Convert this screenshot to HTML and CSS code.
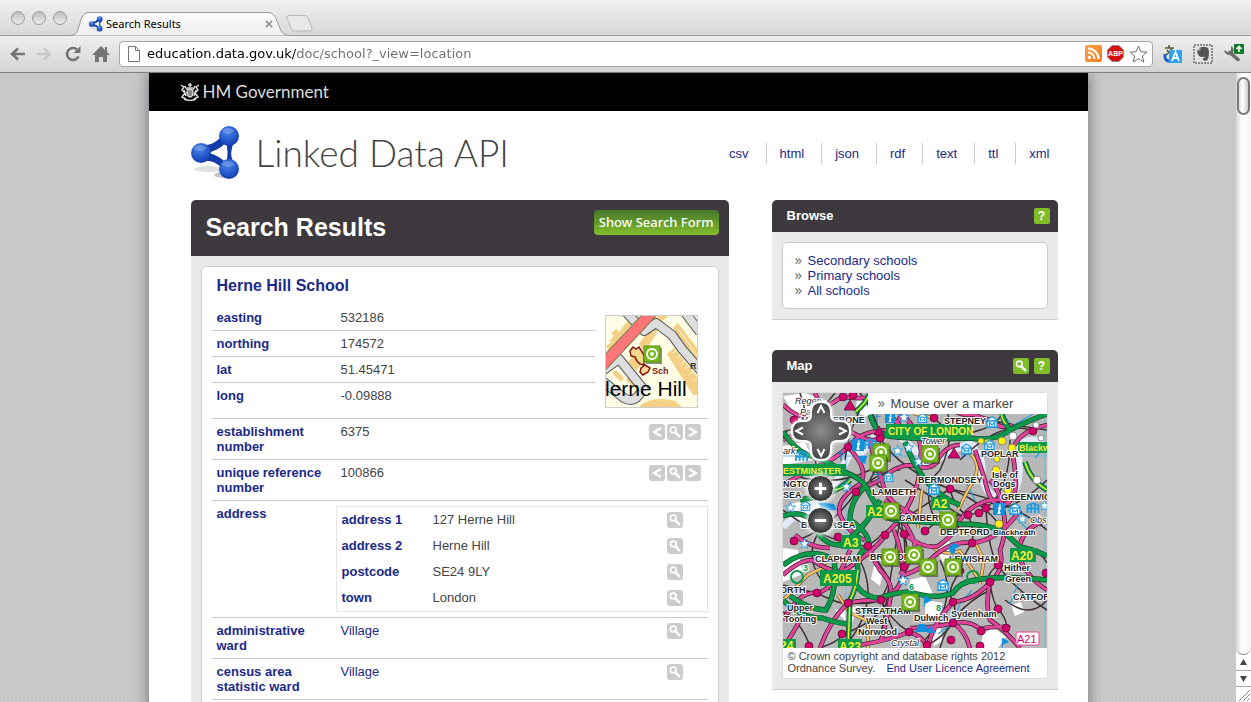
FILE: index.html
```html
<!DOCTYPE html>
<html lang="en">
<head>
<meta charset="utf-8">
<title>Search Results</title>
<link rel="stylesheet" href="styles.css">
</head>
<body>
<svg class="defs" aria-hidden="true">
  <defs>
    <radialGradient id="ball" cx=".42" cy=".3" r=".75"><stop offset="0" stop-color="#4a80e4"/><stop offset=".5" stop-color="#2a60d0"/><stop offset="1" stop-color="#1238a8"/></radialGradient>
    <radialGradient id="pad" cx=".5" cy=".5" r=".6"><stop offset="0" stop-color="#8c8c8c"/><stop offset="1" stop-color="#333"/></radialGradient>
    <linearGradient id="tabfill" x1="0" y1="0" x2="0" y2="1"><stop offset="0" stop-color="#fbfbfb"/><stop offset="1" stop-color="#efefef"/></linearGradient>
    <linearGradient id="feed" x1="0" y1="0" x2="1" y2="1"><stop offset="0" stop-color="#fba54c"/><stop offset="1" stop-color="#ee7d1c"/></linearGradient>
    <symbol id="molecule" viewBox="0 0 50 56">
      <ellipse cx="18" cy="44" rx="15" ry="3" fill="#aaa" opacity=".35"/>
      <ellipse cx="33" cy="50" rx="10" ry="3" fill="#888" opacity=".5"/>
      <path fill="#123aa8" fill-rule="evenodd" d="M12 20Q22 21 31 11L43 17Q38 28 42 37L31 43Q22 34 12 36ZM18 28Q29 31 35 38 38 28 35 17 29 25 18 28Z"/>
      <circle cx="10" cy="28" r="10" fill="url(#ball)"/><circle cx="38" cy="11" r="10" fill="url(#ball)"/><circle cx="38" cy="44" r="10" fill="url(#ball)"/>
      <path d="M20 27Q28 24 34 20Q36 28 34 35Q28 30 20 28Z" fill="#fff"/>
      <ellipse cx="37" cy="6" rx="6" ry="3" fill="#fff" opacity=".2"/><ellipse cx="9" cy="23" rx="6" ry="3" fill="#fff" opacity=".2"/><ellipse cx="37" cy="39" rx="6" ry="3" fill="#fff" opacity=".2"/>
    </symbol>
    <symbol id="find" viewBox="0 0 16 16"><path d="M8 8l4.300 4.300" stroke="#fff" stroke-width="2.400" stroke-linecap="round"/><circle cx="6.300" cy="6" r="2.900" fill="none" stroke="#fff" stroke-width="1.600"/></symbol>
    <symbol id="prev" viewBox="0 0 16 16"><path d="M12 4L5 8l7 4" fill="none" stroke="#fff" stroke-width="2.200"/></symbol>
    <symbol id="next" viewBox="0 0 16 16"><path d="M4 4l7 4-7 4" fill="none" stroke="#fff" stroke-width="2.200"/></symbol>
    <symbol id="pin" viewBox="0 0 20 20"><rect x="3" y="3" width="16" height="16" fill="#333" opacity=".55"/><rect x="1" y="1" width="16" height="16" fill="#78b81f" stroke="#5b9412" stroke-width="1"/><circle cx="9" cy="9" r="5" fill="none" stroke="#fff" stroke-width="1.800"/><circle cx="9" cy="9" r="2" fill="#fff"/></symbol>
    <symbol id="star" viewBox="0 0 12 12"><path d="M6 .5l1.500 3.800 4 .2-3.100 2.600 1 4L6 9l-3.400 2.100 1-4L.5 4.500l4-.2Z" fill="#fff" stroke="#1c9be0" stroke-width="1"/></symbol>
    <symbol id="museum" viewBox="0 0 12 12"><path d="M1 5h10v6H1ZM0 4.500L6 .7l6 3.800M0 11.500h12" fill="#fff" stroke="#1c9be0" stroke-width="1.300"/><path d="M3.500 10V6.500L6 9l2.500-2.500V10" fill="none" stroke="#1c9be0" stroke-width="1.200"/></symbol>
    <symbol id="gate" viewBox="0 0 14 13"><path d="M1 12V4q6-5 12 0v8M5 12V3M9 12V3M1 7h12" fill="none" stroke="#1c9be0" stroke-width="2"/></symbol>
    <symbol id="info" viewBox="0 0 12 12"><path d="M0 0h12v12H0Z" fill="#1290dc"/><path d="M6.800 1.500v2M5 5h2L5.500 10h2" stroke="#fff" stroke-width="1.800" fill="none"/></symbol>
    <symbol id="cross" viewBox="0 0 8 11"><path d="M4 0v11M0 3.500h8" stroke="#1c7fc4" stroke-width="1.200"/></symbol>
    <symbol id="flag" viewBox="0 0 8 11"><path d="M1 11V0l7 4-6 3" fill="#1290dc" stroke="#1290dc"/></symbol>
  </defs>
</svg>

<header class="browser">
  <div class="tabstrip">
    <div class="lights"><button aria-label="Close window"></button><button aria-label="Minimise"></button><button aria-label="Zoom window"></button></div>
    <div class="tab">
      <svg class="tab-shape" viewBox="0 0 220 25"><path d="M0 24.500C7 24 7 21 9 15S12 1.500 19 1.500H198C205 1.500 206 8 209 15S213 24 220 24.500" fill="url(#tabfill)" stroke="#999"/></svg>
      <svg class="favicon"><use href="#molecule"/></svg>
      <span class="tab-title">Search Results</span>
      <button class="tab-close" aria-label="Close tab"><svg viewBox="0 0 9 9"><path d="M1 1l7 7M8 1L1 8" stroke="#959595" stroke-width="2"/></svg></button>
    </div>
    <button class="newtab" aria-label="New tab"><svg viewBox="0 0 27 17"><path d="M4 .5H18Q21 .5 22 3L26 13Q27 16 24 16H9Q6 16 5 13L1 3Q0 .5 4 .5Z" fill="#e8e8e8" stroke="#b8b8b8"/></svg></button>
  </div>
  <div class="toolbar">
    <div class="navbuttons">
      <button aria-label="Back"><svg viewBox="0 0 18 18"><path d="M17 9H4M10 3.500L4 9l6 5.500" fill="none" stroke="#747474" stroke-width="2.600"/></svg></button>
      <button aria-label="Forward"><svg viewBox="0 0 18 18"><path d="M1 9h13M8 3.500L14 9l-6 5.500" fill="none" stroke="#c8c8c8" stroke-width="2.600"/></svg></button>
      <button aria-label="Reload"><svg viewBox="0 0 18 18"><path d="M14.500 11.500A6 6 0 1 1 13 4.500" fill="none" stroke="#747474" stroke-width="2.600"/><path d="M16.500 1v7h-7Z" fill="#747474"/></svg></button>
      <button aria-label="Home"><svg viewBox="0 0 18 18"><path d="M9 1L0 10h3v7h4v-5h4v5h4v-7h3l-3-3V2h-2v3Z" fill="#747474"/></svg></button>
    </div>
    <div class="urlbar">
      <svg class="page-icon" viewBox="0 0 12 16"><path d="M.5.500h7l4 4v11H.5ZM7.500.500v4h4" fill="#fff" stroke="#777"/></svg>
      <input type="text" aria-label="Address" value="education.data.gov.uk/doc/school?_view=location">
      <svg class="bar-icon" viewBox="0 0 17 17"><rect width="17" height="17" rx="2" fill="url(#feed)"/><circle cx="4.500" cy="12.500" r="1.700" fill="#fff"/><path d="M3 7.500a6.500 6.500 0 0 1 6.500 6.500M3 3.500A10.500 10.500 0 0 1 13.500 14" fill="none" stroke="#fff" stroke-width="2"/></svg>
      <svg class="bar-icon" viewBox="0 0 17 17"><path d="M5 .5h7L16.500 5v7L12 16.500H5L.5 12V5Z" fill="#d31111" stroke="#8d8d8d"/><text x="8.500" y="11" text-anchor="middle" class="abp">ABP</text></svg>
      <svg class="bar-icon star" viewBox="0 0 19 18"><path d="M9.500 1l2.400 5.700 6.100.4-4.700 3.900 1.600 6-5.400-3.300L4.100 17l1.600-6L1 7.100l6.100-.4Z" fill="#fff" stroke="#6e6e6e"/></svg>
    </div>
    <div class="extensions">
      <button aria-label="Translate"><svg viewBox="0 0 20 20"><rect x="1" y="1" width="13" height="13" fill="#eceadb"/><path d="M7 1v3M3 4h9M10 4Q8 9 3 11M5 6q2 4 6 5" stroke="#555" stroke-width="1.600" fill="none"/><path d="M3 10q-1 8 6 7" stroke="#1b62c4" stroke-width="3" fill="none"/><rect x="7" y="6" width="13" height="13" rx="1" fill="#27a5ee"/><path d="M10 17l3.500-9 3.500 9M11 14h5" stroke="#fff" stroke-width="1.800" fill="none"/></svg></button>
      <button aria-label="Web clipper"><svg viewBox="0 0 20 20"><rect x="1" y="1" width="18" height="18" fill="#e3e3e3" stroke="#333" stroke-dasharray="2 1"/><path d="M4 7l4-4h5q3 1 3 5 0 8-3 9-4 0-3-3h2q-1-2-3-1-4 0-5-6Z" fill="#555"/><path d="M4 6h3V3" stroke="#bbb" fill="none"/></svg></button>
      <button aria-label="Settings"><svg viewBox="0 0 20 20"><path d="M0 6q1 5 6 5l7 6q3 1 3-2L9 9q2-5-2-7v4L4 8Z" fill="#6b6b6b"/><rect x="10" y="0" width="10" height="10" rx="1" fill="#137a2a"/><path d="M15 8V3M12.500 5L15 2.500 17.500 5" stroke="#fff" stroke-width="1.600" fill="none"/></svg></button>
    </div>
  </div>
</header>

<div class="window">
  <div class="viewport">
    <div class="page">
      <div class="gov">
        <svg class="crest" viewBox="0 0 20 18"><g fill="none" stroke="#d8d8d8" stroke-width="1.500"><path d="M10 0v4M8 2h4M7 5h6M1 2l3 2-2 3 3 3-3 4 4 2M19 2l-3 2 2 3-3 3 3 4-4 2M5 3l2 4M15 3l-2 4M4 16q6 3 12 0M4 7l2 6M16 7l-2 6"/><ellipse cx="10" cy="10" rx="3" ry="4" fill="#888"/></g></svg>
        <span>HM Government</span>
      </div>
      <div class="masthead">
        <svg class="logo"><use href="#molecule"/></svg>
        <h1>Linked Data API</h1>
        <nav class="formats" aria-label="Formats">
          <a href="#csv">csv</a><a href="#html">html</a><a href="#json">json</a><a href="#rdf">rdf</a><a href="#text">text</a><a href="#ttl">ttl</a><a href="#xml">xml</a>
        </nav>
      </div>
      <div class="columns">
        <main class="panel results">
          <div class="panel-head"><h2>Search Results</h2><button class="show-form">Show Search Form</button></div>
          <div class="card">
            <h3><a href="#school">Herne Hill School</a></h3>
            <div class="location">
              <table class="facts">
                <tr><th scope="row">easting</th><td>532186</td></tr>
                <tr><th scope="row">northing</th><td>174572</td></tr>
                <tr><th scope="row">lat</th><td>51.45471</td></tr>
                <tr><th scope="row">long</th><td>-0.09888</td></tr>
              </table>
              <svg class="minimap" viewBox="0 0 91 91" role="img" aria-label="Herne Hill">
                <rect width="91" height="91" fill="#fffde6"/>
                <g fill="#f5cf85"><path d="M3 25l5-5-3-3 5-4 3 3L22 4l4 4L8 28ZM0 30l6-4 5 5-6 8ZM52 0h10L50 11l-5-5ZM33 28l11-15 6 6-12 17ZM44 8l6-3 5 6-6 7ZM67 12l5-5 21 28v14ZM61 38l7-6 24 30v17h-5ZM22 46l7-8 7 9-6 8ZM10 54l8 8-3 4-9-9ZM24 59l8 9-3 4-9-8ZM33 91q12-12 36-6l7 6Z"/></g>
                <path d="M72 13l21 29M68 20l23 29M67 37l5-4M71 42l5-4M75 48l5-4M79 53l5-4M83 59l5-4M87 65l5-4" stroke="#fffde6"/>
                <g fill="none" stroke="#555" stroke-linejoin="round" stroke-width="10"><path d="M18-6L38 15 50 7 66 19 76 33 95 55M77-6L94 16M-5 56L13 43 39 75M-5 64L18 82Q28 88 35 76"/></g>
                <g fill="none" stroke="#dedede" stroke-linejoin="round" stroke-width="8"><path d="M18-6L38 15 50 7 66 19 76 33 95 55M77-6L94 16M-5 56L13 43 39 75M-5 64L18 82Q28 88 35 76"/></g>
                <path d="M-6 52L48-6" stroke="#774" stroke-width="12"/><path d="M-6 52L48-6" stroke="#fc7677" stroke-width="10"/>
                <path d="M24 35l3-4 3 2 3-2 5 8v10l-4-1-3-3-2-4-4-1ZM35 52l4-3 5 3-2 4-5 3-3-3Z" fill="#f8d88b" stroke="#801818" stroke-width="1.500"/>
                <use href="#pin" x="37" y="29" width="20" height="20"/>
                <text x="46" y="58" class="sch">Sch</text><text x="-1" y="80" class="place">lerne Hill</text><text x="84" y="53" class="road">R</text>
              </svg>
            </div>
            <table class="facts">
              <tr><th scope="row">establishment number</th><td>6375</td><td class="actions"><div class="tools"><button aria-label="Less than"><svg><use href="#prev"/></svg></button><button aria-label="Find"><svg><use href="#find"/></svg></button><button aria-label="More than"><svg><use href="#next"/></svg></button></div></td></tr>
              <tr><th scope="row">unique reference number</th><td>100866</td><td class="actions"><div class="tools"><button aria-label="Less than"><svg><use href="#prev"/></svg></button><button aria-label="Find"><svg><use href="#find"/></svg></button><button aria-label="More than"><svg><use href="#next"/></svg></button></div></td></tr>
              <tr><th scope="row">address</th><td colspan="2" class="nested">
                <table class="facts address">
                  <tr><th scope="row">address 1</th><td>127 Herne Hill</td><td class="actions"><div class="tools"><button class="mid" aria-label="Find"><svg><use href="#find"/></svg></button></div></td></tr>
                  <tr><th scope="row">address 2</th><td>Herne Hill</td><td class="actions"><div class="tools"><button class="mid" aria-label="Find"><svg><use href="#find"/></svg></button></div></td></tr>
                  <tr><th scope="row">postcode</th><td>SE24 9LY</td><td class="actions"><div class="tools"><button class="mid" aria-label="Find"><svg><use href="#find"/></svg></button></div></td></tr>
                  <tr><th scope="row">town</th><td>London</td><td class="actions"><div class="tools"><button class="mid" aria-label="Find"><svg><use href="#find"/></svg></button></div></td></tr>
                </table></td></tr>
              <tr><th scope="row">administrative ward</th><td><a href="#village">Village</a></td><td class="actions"><div class="tools"><button class="mid" aria-label="Find"><svg><use href="#find"/></svg></button></div></td></tr>
              <tr><th scope="row">census area statistic ward</th><td><a href="#village">Village</a></td><td class="actions"><div class="tools"><button class="mid" aria-label="Find"><svg><use href="#find"/></svg></button></div></td></tr>
            </table>
          </div>
        </main>
        <aside class="side">
          <section class="panel">
            <div class="panel-head small"><h2>Browse</h2><button class="green" aria-label="Help">?</button></div>
            <div class="card">
              <ul class="links"><li><a href="#secondary">Secondary schools</a></li><li><a href="#primary">Primary schools</a></li><li><a href="#all">All schools</a></li></ul>
            </div>
          </section>
          <section class="panel">
            <div class="panel-head small"><h2>Map</h2><button class="green" aria-label="Search map"><svg><use href="#find"/></svg></button><button class="green" aria-label="Help">?</button></div>
            <div class="mapbox">
              <div class="canvas">
                <svg class="map" viewBox="783 393 264 255" role="img" aria-label="Map of south London schools">
                  <rect x="783" y="393" width="264" height="255" fill="#b8b8b8"/>
                  <g fill="#fff"><path d="M783 396l22-3 22 8-5 24-24-3ZM783 446l22-4 8 18-30 5ZM790 504l26-6 10 20-25 8ZM783 548l15 2 5 24-20 8ZM874 566l9 4-3 16-9-7ZM835 610l25-4-10 20ZM910 580l15-4 8 18-20 6ZM935 548l12-10 8 14-12 10ZM925 600l18 3-4 14-14-3ZM1011 605l10-3 3 10-9 4ZM983 635l10-8 13 10-8 11H980ZM930 632l10-6 3 15-9 5ZM858 395l16 8-6 14-13-5Z"/></g>
                  <path d="M783 527Q800 510 816 502T842 470 856 452 872 440 905 441 925 463 950 452 974 450Q982 455 982 469 982 488 992 495 1006 503 1014 492 1022 480 1018 452 1018 442 1032 440 1042 440 1048 452" fill="none" stroke="#e2eafa" stroke-width="7"/>
                  <path d="M846 393V648M1045 393V648M783 456H1047" stroke="#6eb5df" stroke-width="1"/>
                  <g fill="none" stroke="#3e3033" stroke-width="1.500" stroke-linejoin="round">
                    <path d="M783 432Q810 425 835 393M783 472Q830 490 870 470M800 393Q815 440 820 500M783 510Q830 545 868 546 900 520 950 489 1010 500 1047 530M783 585Q800 590 817 593 840 605 848 603 870 605 881 600 890 620 909 632M820 648Q842 640 842 634 890 620 904 567 910 550 904 534 890 510 870 510M868 546L890 580 881 600 900 648M925 532Q940 515 968 515 980 513 986 508 1010 490 1010 440M950 489Q955 510 968 515 975 530 972 543 960 560 961 571 945 590 953 602 958 615 953 623 940 640 927 645M934 418Q955 440 980 430 1000 425 1010 400M998 565Q985 575 990 582 992 600 998 609 1008 620 1006 628 1010 640 1020 648M986 508Q988 550 998 565 1015 590 1047 610M890 405Q910 395 930 400 960 418 1047 430M783 612Q800 620 810 646M940 393Q960 430 940 470 918 490 938 525M860 393Q895 440 870 480 905 500 905 555"/>
                    <path d="M880 438Q900 470 950 489 980 500 999 524M940 648Q950 610 990 590M1047 480Q1010 515 986 508M1020 545Q1040 550 1047 563M795 541Q830 530 856 492 880 470 900 470M850 640Q880 600 860 560M900 520L880 640M925 640Q960 600 940 560M960 460Q1000 420 1030 430M820 530Q800 560 830 590M905 480L960 515M1005 600Q1030 620 1047 600M870 395Q850 420 845 460"/>
                  </g>
                  <g fill="none" stroke="#2da3dc" stroke-width="1.200"><path d="M982 400l10 14 8-4 12 16 28-16M1035 458l12-14M935 505l10 14-4 12M972 590l-12 14-8 20-14 10M1008 510l20 20M1018 584l-8 20M965 480l10 20"/></g>
                  <g fill="none" stroke="#654" stroke-width="3.500"><path d="M875 510l-14 20M968 452q18 12 0 38l-10 20M922 490l-4 38M974 540l10 20-4 24M930 545q12 12 30 6l20 30M838 595l12 18 18 8v27M783 600l25-25 20-10M905 400l10 14 20 4"/></g>
                  <g fill="none" stroke="#fbc766" stroke-width="2.200"><path d="M875 510l-14 20M968 452q18 12 0 38l-10 20M922 490l-4 38M974 540l10 20-4 24M930 545q12 12 30 6l20 30M838 595l12 18 18 8v27M783 600l25-25 20-10M905 400l10 14 20 4"/></g>
                  <defs><path id="mainroads" d="M783 405Q800 420 812 418 835 400 843 397 865 400 880 395M815 393Q830 430 845 428 870 445 880 438 900 430 905 400M848 447Q870 470 860 484 835 500 840 515 850 535 865 540M783 485Q800 475 810 470 835 460 848 447 860 430 890 430M856 492Q870 485 880 480 900 462 915 466 930 470 936 463 945 445 960 445M870 440Q875 465 882 480 885 500 905 510 920 520 940 520M906 418Q925 440 920 460 920 480 915 490 905 520 880 538M904 534Q925 550 938 546 955 535 960 520 970 505 990 500 1020 500 1047 495M783 575Q800 560 812 560 835 575 845 570 870 555 886 535M868 540Q870 555 880 570 895 585 890 600 885 630 881 640M894 530Q905 560 902 580 895 595 881 600 860 600 848 603 830 620 820 648M783 620Q800 590 817 593 835 590 850 550M904 575Q920 570 930 560 950 540 972 543 1000 540 1020 510M910 628Q935 628 953 623 970 620 980 629 1000 625 1010 628M927 648Q935 620 953 602 975 600 990 582 1005 570 1000 550 1008 530 1003 510 1000 490 990 480M990 582Q985 605 990 620 1005 630 1020 648M975 450Q980 465 985 480 990 505 1000 505 1014 505 1016 485 1015 465 1012 450 1020 430 1047 425M783 648Q795 630 800 620M860 645Q890 640 909 632 920 635 927 645M940 393Q950 415 970 415 1010 395 1047 400M1047 520Q1015 530 1020 560 1030 580 1047 590M885 500Q910 525 915 545 910 565 900 575M795 535Q810 548 830 548M953 623Q965 630 970 648M783 440Q800 430 815 440 830 470 825 490M890 393Q885 415 900 425M960 398Q965 415 990 420 1000 430 1012 425"/></defs>
                  <use href="#mainroads" fill="none" stroke="#3c1c2c" stroke-width="4.600"/>
                  <use href="#mainroads" fill="none" stroke="#e0459a" stroke-width="3.200"/>
                  <defs><path id="trunkroads" d="M783 432Q795 450 808 455 830 462 845 472 860 478 866 486 850 500 850 520 872 535 868 546 855 555 858 570 856 590 850 600L848 648M866 486Q880 518 895 520L925 522 960 524Q990 524 1005 533L1020 547Q1035 550 1047 556M783 565Q810 545 834 560 838 590 826 610 810 610 790 596M856 585Q865 598 880 598 895 592 910 592 935 600 953 593 960 582 975 580 1000 575 1047 580M783 516Q800 510 812 520 820 545 840 545 865 530 880 500M870 415Q875 432 888 436 920 440 970 438 995 442 1010 430 1030 420 1047 414M783 600Q800 618 822 618 840 624 850 624M1025 462Q1030 480 1047 490M870 393Q865 405 855 412M850 480Q835 495 800 500M905 442Q915 470 930 485 945 500 960 505M1003 400Q998 415 1010 430"/></defs>
                  <use href="#trunkroads" fill="none" stroke="#174c2c" stroke-width="5.400"/>
                  <use href="#trunkroads" fill="none" stroke="#0b9a49" stroke-width="4"/>
                  <path d="M858 570Q856 590 850 600L848 648M1025 462Q1030 480 1047 490M1003 400Q998 415 1006 424M870 393Q865 405 855 412M850 480Q845 488 835 490" fill="none" stroke="#e8ef35" stroke-width="1.400"/>
                  <g fill="none" stroke="#0b9a49" stroke-width="2"><circle cx="797" cy="577" r="6"/><circle cx="973" cy="577" r="6"/></g>
                  <g fill="#d2006b" stroke="#5b1236" stroke-width=".8">
                    <circle cx="843" cy="397" r="4"/><circle cx="853" cy="395" r="4"/><circle cx="794" cy="420" r="4"/><circle cx="880" cy="438" r="4"/><circle cx="848" cy="447" r="4"/><circle cx="856" cy="492" r="4"/><circle cx="934" cy="418" r="4"/><circle cx="1033" cy="431" r="4"/><circle cx="950" cy="489" r="4"/><circle cx="968" cy="515" r="4"/><circle cx="979" cy="513" r="4"/><circle cx="986" cy="508" r="4"/><circle cx="925" cy="531" r="4"/><circle cx="794" cy="541" r="4"/><circle cx="838" cy="537" r="4"/><circle cx="868" cy="546" r="4"/><circle cx="885" cy="535" r="4"/><circle cx="904" cy="534" r="4"/><circle cx="904" cy="567" r="4"/><circle cx="817" cy="593" r="4"/><circle cx="848" cy="603" r="4"/><circle cx="881" cy="600" r="4"/><circle cx="842" cy="634" r="4"/><circle cx="809" cy="646" r="4"/><circle cx="909" cy="632" r="4"/><circle cx="972" cy="543" r="4"/><circle cx="998" cy="565" r="4"/><circle cx="990" cy="582" r="4"/><circle cx="953" cy="602" r="4"/><circle cx="998" cy="609" r="4"/><circle cx="953" cy="623" r="4"/><circle cx="981" cy="631" r="4"/><circle cx="1006" cy="628" r="4"/><circle cx="980" cy="646" r="4"/><circle cx="951" cy="640" r="4"/><circle cx="927" cy="645" r="4"/><circle cx="1046" cy="573" r="4"/><circle cx="961" cy="571" r="3"/>
                    <path d="M954 448l6 10h-12ZM850 400l6 10h-12ZM879 426l5 9h-10Z"/>
                  </g>
                  <g fill="#fff200" stroke="#777" stroke-width=".8"><circle cx="1002" cy="441" r="4"/><circle cx="988" cy="443" r="4"/><circle cx="1012" cy="448" r="4"/><circle cx="997" cy="459" r="3"/><circle cx="996" cy="470" r="4"/><circle cx="1008" cy="490" r="4"/><circle cx="999" cy="524" r="4"/><circle cx="981" cy="441" r="3"/></g>
                  <g fill="#fff" stroke="#777" stroke-width=".8"><circle cx="1013" cy="436" r="4"/><circle cx="1036" cy="425" r="3"/><circle cx="1041" cy="438" r="3"/><circle cx="1037" cy="480" r="4"/></g>
                  <use href="#museum" x="917" y="413" width="11" height="10"/><use href="#museum" x="986" y="416" width="12" height="12"/><use href="#museum" x="961" y="443" width="11" height="12"/><use href="#museum" x="984" y="439" width="11" height="12"/><use href="#museum" x="928" y="483" width="12" height="12"/><use href="#museum" x="883" y="472" width="11" height="10"/><use href="#museum" x="800" y="501" width="11" height="10"/><use href="#museum" x="937" y="579" width="12" height="12"/><use href="#museum" x="1009" y="503" width="12" height="12"/>
                  <use href="#gate" x="795" y="450" width="13" height="12"/><use href="#gate" x="864" y="438" width="13" height="12"/><use href="#gate" x="1026" y="502" width="14" height="12"/>
                  <use href="#info" x="852" y="439" width="12" height="12"/><use href="#info" x="884" y="413" width="12" height="10"/><use href="#info" x="993" y="503" width="12" height="12"/>
                  <use href="#star" x="898" y="411" width="12" height="12"/><use href="#star" x="892" y="445" width="11" height="11"/><use href="#star" x="903" y="442" width="11" height="11"/><use href="#star" x="841" y="481" width="11" height="11"/><use href="#star" x="785" y="502" width="11" height="11"/><use href="#star" x="799" y="538" width="11" height="11"/><use href="#star" x="897" y="574" width="12" height="12"/><use href="#star" x="913" y="456" width="11" height="11"/><use href="#star" x="1017" y="513" width="11" height="11"/><use href="#star" x="1039" y="500" width="11" height="11"/>
                  <use href="#cross" x="873" y="413" width="8" height="10"/><use href="#cross" x="837" y="450" width="8" height="11"/><use href="#cross" x="874" y="471" width="8" height="11"/><use href="#cross" x="805" y="478" width="8" height="11"/><use href="#flag" x="923" y="596" width="9" height="11"/><use href="#flag" x="1001" y="638" width="8" height="10"/>
                  <path d="M948 547l6-4 6 3-5 3v4l-4 1ZM915 632l4-8h6l5 8ZM930 625l6 8h-9ZM818 502l16 2 3 6-14 1ZM858 456h9l-2 8-5-3Z" fill="#1290dc"/>
                  <g fill="#0b9a49"><rect x="886" y="424" width="85" height="14"/><rect x="783" y="464" width="63" height="12"/><rect x="1018" y="442" width="29" height="11"/><rect x="931" y="497" width="19" height="13"/><rect x="866" y="505" width="18" height="13"/><rect x="841" y="535" width="20" height="14"/><rect x="820" y="570" width="36" height="16"/><rect x="1010" y="548" width="26" height="14"/><rect x="783" y="639" width="13" height="9"/><rect x="838" y="639" width="24" height="9"/></g>
                  <rect x="1016" y="632" width="23" height="13" rx="2" fill="#fff" stroke="#e0489c"/>
                  <g class="badge"><text x="888" y="435" class="t10">CITY OF LONDON</text><text x="783" y="474" class="t9">ESTMINSTER</text><text x="1019" y="451" class="t9">Blackwa</text><text x="932" y="508">A2</text><text x="867" y="516">A2</text><text x="843" y="547">A3</text><text x="823" y="583">A205</text><text x="1011" y="560">A20</text><text x="780" y="650">24</text><text x="839" y="651">A23</text></g>
                  <text x="1017" y="643" class="pinkroad">A21</text>
                  <g class="label"><text x="944" y="424">STEPNEY</text><text x="981" y="457">POPLAR</text><text x="992" y="478">Isle of</text><text x="993" y="487">Dogs</text><text x="918" y="483">BERMONDSEY</text><text x="1001" y="500">GREENWICH</text><text x="872" y="495">LAMBETH</text><text x="899" y="521">CAMBERW</text><text x="940" y="535">DEPTFORD</text><text x="993" y="535" class="t8">Blackheath</text><text x="949" y="562">LEWISHAM</text><text x="1004" y="571">Hither</text><text x="1005" y="582">Green</text><text x="1013" y="600">CATFORD</text><text x="951" y="617">Sydenham</text><text x="914" y="621">Dulwich</text><text x="855" y="614">STREATHAM</text><text x="866" y="624">West</text><text x="858" y="635">Norwood</text><text x="815" y="562">CLAPHAM</text><text x="870" y="560">BRIXTON</text><text x="780" y="593">ORTH</text><text x="787" y="611">Upper</text><text x="784" y="622">Tooting</text><text x="783" y="487">NGTON</text><text x="783" y="498">SEA</text><text x="801" y="528">BATTERSEA</text><text x="801" y="423">MARYLEBONE</text></g>
                  <g class="thin"><text x="795" y="404">Regen</text><text x="800" y="415">Par</text><text x="783" y="454">ark</text><text x="921" y="444">Tower</text><text x="891" y="646">Crystal</text><text x="1030" y="523">Obs</text></g>
                  <g class="route"><text x="803" y="571">3</text><text x="909" y="590">6</text><text x="936" y="611">8</text></g>
                  <use href="#pin" x="872" y="443" width="20" height="20"/><use href="#pin" x="869" y="454" width="20" height="20"/><use href="#pin" x="921" y="445" width="20" height="20"/><use href="#pin" x="882" y="502" width="20" height="20"/><use href="#pin" x="939" y="511" width="20" height="20"/><use href="#pin" x="881" y="548" width="20" height="20"/><use href="#pin" x="905" y="546" width="20" height="20"/><use href="#pin" x="919" y="558" width="20" height="20"/><use href="#pin" x="944" y="558" width="20" height="20"/><use href="#pin" x="901" y="593" width="20" height="20"/>
                </svg>
                <div class="controls">
                  <div class="pan">
                    <svg class="pan-shape" viewBox="0 0 66 66"><path d="M33 4Q43 4 43 14V17Q43 23 49 23H52Q62 23 62 33T52 43H49Q43 43 43 49V52Q43 62 33 62T23 52V49Q23 43 17 43H14Q4 43 4 33T14 23H17Q23 23 23 17V14Q23 4 33 4Z" fill="url(#pad)" stroke="#fff" stroke-width="2"/></svg>
                    <button class="up" aria-label="Pan up"><svg viewBox="0 0 10 10"><path d="M1.500 9L5 2l3.500 7"/></svg></button>
                    <button class="left" aria-label="Pan left"><svg viewBox="0 0 10 10"><path d="M9 1.500L2 5l7 3.500"/></svg></button>
                    <button class="right" aria-label="Pan right"><svg viewBox="0 0 10 10"><path d="M1 1.500L8 5l-7 3.500"/></svg></button>
                    <button class="down" aria-label="Pan down"><svg viewBox="0 0 10 10"><path d="M1.500 1L5 8l3.500-7"/></svg></button>
                  </div>
                  <button class="zoom" aria-label="Zoom in"><svg viewBox="0 0 26 26"><path d="M7 13h12M13 7v12"/></svg></button>
                  <button class="zoom" aria-label="Zoom out"><svg viewBox="0 0 26 26"><path d="M7 13h12"/></svg></button>
                </div>
                <ul class="links hint"><li>Mouse over a marker</li></ul>
              </div>
              <p class="copyright">© Crown copyright and database rights 2012 Ordnance Survey. <a href="#licence">End User Licence Agreement</a></p>
            </div>
          </section>
        </aside>
      </div>
    </div>
  </div>
  <div class="scrollbar" aria-hidden="true">
    <div class="track"><div class="thumb"></div></div>
    <svg class="arrows" viewBox="0 0 15 32"><path d="M4 10h7L7.500 4ZM4 21h7l-3.500 6Z" fill="#444"/><path d="M0 15.500h15M0 31.500h15" stroke="#aaa"/></svg>
    <svg class="grip" viewBox="0 0 15 15"><path d="M3 14L14 3M7 14l7-7M11 14l3-3" stroke="#888"/></svg>
  </div>
</div>
</body>
</html>
```

FILE: styles.css
```css
* { box-sizing: border-box; }
html, body { height: 100%; }
body {
  margin: 0;
  display: flex;
  flex-direction: column;
  overflow: hidden;
  font: 13px/15px "Liberation Sans", Arial, sans-serif;
  color: #444;
}
h1, h2, h3, p, ul { margin: 0; padding: 0; }
a { color: #1a2a8a; text-decoration: none; }
button { border: 0; padding: 0; background: none; font: inherit; color: inherit; display: block; }
svg { display: block; }
.defs { position: absolute; width: 0; height: 0; }

/* browser frame */
.browser { flex: none; font-family: "Noto Sans", "Open Sans", sans-serif; }
.tabstrip {
  display: flex;
  align-items: flex-end;
  height: 36px;
  border-bottom: 1px solid #999;
  background: linear-gradient(#f0f0f0, #d8d8d8);
}
.lights { display: flex; gap: 7px; padding: 0 3px 10px 11px; }
.lights button {
  width: 14px;
  height: 14px;
  border: 1px solid #999;
  border-radius: 50%;
  background: linear-gradient(#bdbdbd, #ececec);
}
.tab {
  position: relative;
  display: flex;
  align-items: center;
  width: 220px;
  height: 25px;
  margin-bottom: -1px;
  padding: 0 17px 0 18px;
}
.tab-shape { position: absolute; inset: 0; width: 100%; height: 100%; }
.favicon { position: relative; width: 16px; height: 16px; }
.tab-title { position: relative; flex: 1; padding-left: 2px; font-size: 11px; color: #000; }
.tab-close { position: relative; }
.tab-close svg { width: 8px; height: 8px; }
.newtab { padding-bottom: 3px; margin-left: -4px; }
.newtab svg { width: 27px; height: 17px; }
.toolbar {
  display: flex;
  align-items: center;
  height: 37px;
  padding: 0 7px 1px 8px;
  border-bottom: 1px solid #808080;
  background: linear-gradient(#efefef, #d3d3d3);
}
.navbuttons { display: flex; gap: 10px; padding-right: 9px; }
.navbuttons svg { width: 18px; height: 18px; }
.urlbar {
  display: flex;
  align-items: center;
  flex: 1;
  height: 26px;
  padding: 0 4px 0 8px;
  gap: 5px;
  border: 1px solid #a6a6a6;
  border-radius: 4px;
  background: #fff;
}
.page-icon { width: 12px; height: 16px; margin-right: 2px; }
.urlbar input {
  flex: 1;
  min-width: 0;
  height: 20px;
  padding: 0;
  border: 0;
  font: 13px/20px "DejaVu Sans", sans-serif;
  color: transparent;
  background: linear-gradient(90deg, #000 149px, #6e6e6e 149px);
  -webkit-background-clip: text;
  background-clip: text;
}
.bar-icon { width: 17px; height: 17px; }
.bar-icon.star { width: 19px; height: 18px; }
.abp { font: bold 7px "Liberation Sans", sans-serif; fill: #fff; }
.extensions { display: flex; gap: 11px; padding-left: 9px; }
.extensions svg { width: 20px; height: 20px; }

/* page area */
.window { flex: 1; min-height: 0; display: flex; }
.viewport {
  flex: 1;
  overflow: hidden;
  background: linear-gradient(45deg, #cdccce 25%, #c2c1c4 25% 50%, #cdccce 50% 75%, #c2c1c4 75%) 0 0 / 4px 4px;
}
.page {
  max-width: 939px;
  min-height: 100%;
  margin: 0 auto;
  background: #fff;
  box-shadow: 0 0 14px rgba(0, 0, 0, .45);
}
.gov {
  display: flex;
  align-items: center;
  gap: 3px;
  height: 38px;
  padding-left: 31px;
  background: #000;
  color: #ddd;
  font: 17px/24px Lato, sans-serif;
}
.crest { width: 20px; height: 18px; }
.masthead { display: flex; align-items: center; padding: 14px 30px 18px 42px; }
.logo { width: 50px; height: 56px; }
h1 { flex: 1; padding-left: 15px; font: 300 37px/56px Lato, sans-serif; color: #444; white-space: nowrap; }
.formats { display: flex; }
.formats a { padding: 3px 17px 3px 13px; border-left: 1px solid #ccc; }
.formats a:first-child { border: 0; }
.formats a:last-child { padding-right: 8px; }
.columns { display: flex; align-items: flex-start; gap: 43px; padding: 1px 30px 0 42px; }
.results { flex: 1; min-width: 0; }
.side { flex: none; width: 286px; display: flex; flex-direction: column; gap: 30px; }

.panel { border-radius: 5px 5px 0 0; border-bottom: 1px solid #ccc; background: #eaeaea; padding-bottom: 10px; }
.panel-head {
  display: flex;
  align-items: flex-start;
  gap: 5px;
  min-height: 56px;
  padding: 10px 10px 10px 15px;
  border-radius: 5px 5px 0 0;
  background: #3d393f;
  color: #fff;
}
.panel-head h2 { flex: 1; font-size: 25px; line-height: 34px; }
.panel-head.small { min-height: 32px; padding: 8px 8px 8px 15px; }
.panel-head.small h2 { font-size: 13px; line-height: 15px; }
.show-form {
  height: 25px;
  padding: 0 5px;
  border-radius: 4px;
  background: linear-gradient(#45772a, #84bd2c);
  font: 500 13px/25px "Noto Sans", sans-serif;
  color: #fff;
  white-space: nowrap;
}
.green { width: 16px; height: 16px; border-radius: 2px; background: #80bc28; font: bold 12px/16px "Liberation Sans", sans-serif; text-align: center; }
.green svg { width: 16px; height: 16px; }
.card { margin: 10px 10px 0; padding: 10px; border: 1px solid #ccc; border-radius: 5px; background: #fff; }
.results .card { padding-top: 8px; }
h3 { padding: 0 5px 9px; font-size: 16px; line-height: 21px; }

/* property tables */
.location { display: flex; align-items: flex-start; border-bottom: 1px solid #ccc; }
.location .facts { flex: 1; }
.location tr:last-child > * { border: 0; }
.minimap { width: 93px; height: 93px; margin: 10px; border: 1px solid #ccc; }
.sch { font: bold 9px "Liberation Sans", sans-serif; fill: #801818; }
.place { font: 21px "Liberation Sans", sans-serif; fill: #000; }
.road { font: bold 9px "Liberation Sans", sans-serif; fill: #333; }
.facts { width: 100%; border-spacing: 0; }
.facts th, .facts td { padding: 5px; border-bottom: 1px solid #ccc; text-align: left; vertical-align: top; }
.facts th { width: 124px; color: #1a2a8a; }
.facts td.nested { padding: 5px 0; }
.facts td.actions { width: 64px; padding: 5px 7px 0 5px; }
.facts.address { border: 1px solid #e6e6e6; }
.facts.address th { width: 91px; }
.facts.address th, .facts.address td { padding-bottom: 6px; border: 0; }
.facts.address td.actions { width: 62px; padding: 5px 6px 0 4px; }
.tools { display: grid; grid-template-columns: repeat(3, 16px); gap: 2px; }
.tools button { width: 16px; height: 16px; border-radius: 3px; background: #ccc; }
.tools .mid { grid-column: 2; }
.tools svg { width: 16px; height: 16px; }

/* sidebar */
.links { list-style: none; padding-left: 15px; }
.links li { position: relative; }
.links li::before {
  content: "»";
  position: absolute;
  left: -13px;
  top: -1px;
  font: 15px/15px "Noto Sans", sans-serif;
  color: #777;
}
.mapbox { margin: 10px 10px 0; border: 1px solid #ddd; border-radius: 3px; background: #fff; }
.canvas { position: relative; }
.map { width: 100%; height: auto; }
.label { font: bold 9px "Liberation Sans Narrow", "Liberation Sans", sans-serif; fill: #222; stroke: #fff; stroke-width: 2px; stroke-linejoin: round; paint-order: stroke; }
.t8 { font-size: 8px; }
.badge { font: bold 12px "Liberation Sans Narrow", "Liberation Sans", sans-serif; fill: #f6f032; }
.badge .t9 { font-size: 9px; }
.badge .t10 { font-size: 10px; }
.thin { font: italic 9px "Liberation Sans", sans-serif; fill: #222; stroke: #fff; stroke-width: 2px; paint-order: stroke; }
.route { font: bold 9px "Liberation Sans", sans-serif; fill: #0b9a49; stroke: #fff; stroke-width: 2px; paint-order: stroke; }
.pinkroad { font: 11px "Liberation Sans", sans-serif; fill: #d2006b; }
.controls { position: absolute; left: 5px; top: 5px; display: flex; flex-direction: column; align-items: center; gap: 5px; }
.pan {
  position: relative;
  display: grid;
  grid-template: repeat(3, 22px) / repeat(3, 22px);
  margin-bottom: 6px;
  place-items: center;
}
.pan-shape { position: absolute; inset: 0; width: 66px; height: 66px; filter: drop-shadow(0 0 2px #fff); }
.pan button { position: relative; }
.pan button svg { width: 10px; height: 10px; }
.controls button path { fill: none; stroke: #fff; stroke-width: 2px; }
.up { grid-area: 1 / 2; }
.left { grid-area: 2 / 1; }
.right { grid-area: 2 / 3; }
.down { grid-area: 3 / 2; }
.zoom { width: 27px; height: 27px; border: 1px solid #fff; border-radius: 50%; background: radial-gradient(#888, #333 70%); box-shadow: 0 0 4px 1px #fff; }
.zoom svg { width: 25px; height: 25px; }
.controls .zoom path { stroke-width: 3px; }
.hint { position: absolute; right: 0; top: 0; width: 179px; padding: 3px 0 3px 23px; background: #fff; }
.copyright { padding: 2px 5px 4px; font-size: 11px; line-height: 12px; }
.copyright a { padding-left: 8px; }

/* scrollbar */
.scrollbar { flex: none; width: 15px; display: flex; flex-direction: column; background: #fff; }
.track { flex: 1; padding: 4px 1px; border-radius: 0 0 8px 8px; background: linear-gradient(90deg, #d5d5d5, #fff 40%, #f4f4f4); border-bottom: 1px solid #888; }
.thumb { height: 38px; border: 2px solid #777; border-radius: 7px; background: linear-gradient(90deg, #ddd, #fff 40%, #ccc); }
.arrows { width: 15px; height: 32px; }
.grip { width: 15px; height: 15px; }
```
